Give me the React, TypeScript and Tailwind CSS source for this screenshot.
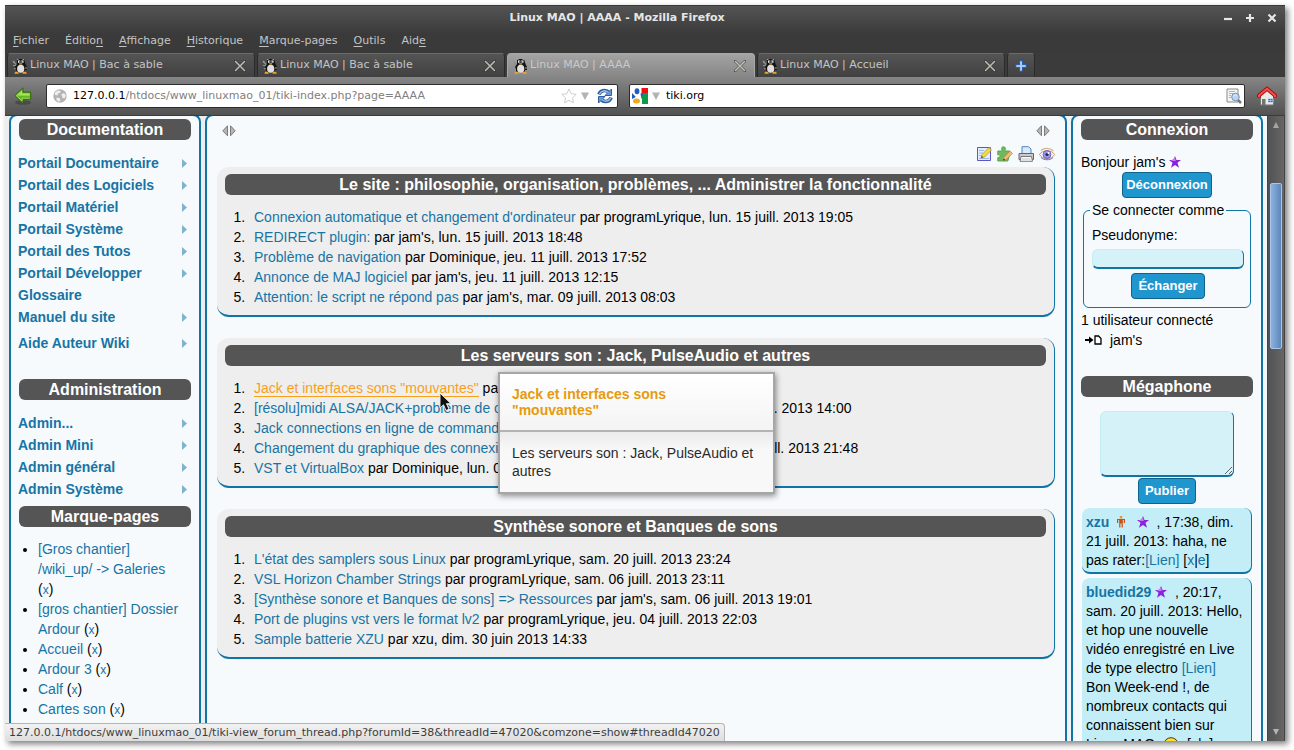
import { ReactNode } from 'react'
import clsx from 'clsx'

type MenuEntry = { label: string; arrow?: boolean; spaced?: boolean }
type Topic = { title: string; info: string; hover?: boolean }

const DOC_MENU: MenuEntry[] = [
    { label: 'Portail Documentaire', arrow: true },
    { label: 'Portail des Logiciels', arrow: true },
    { label: 'Portail Matériel', arrow: true },
    { label: 'Portail Système', arrow: true },
    { label: 'Portail des Tutos', arrow: true },
    { label: 'Portail Développer', arrow: true },
    { label: 'Glossaire' },
    { label: 'Manuel du site', arrow: true },
    { label: 'Aide Auteur Wiki', arrow: true, spaced: true },
]

const ADMIN_MENU: MenuEntry[] = [
    { label: 'Admin...', arrow: true },
    { label: 'Admin Mini', arrow: true },
    { label: 'Admin général', arrow: true },
    { label: 'Admin Système', arrow: true },
]

const BOOKMARKS = [
    '[Gros chantier] /wiki_up/ -> Galeries',
    '[gros chantier] Dossier Ardour',
    'Accueil',
    'Ardour 3',
    'Calf',
    'Cartes son',
]

const SITE_TOPICS: Topic[] = [
    { title: "Connexion automatique et changement d'ordinateur", info: 'par programLyrique, lun. 15 juill. 2013 19:05' },
    { title: 'REDIRECT plugin:', info: "par jam's, lun. 15 juill. 2013 18:48" },
    { title: 'Problème de navigation', info: 'par Dominique, jeu. 11 juill. 2013 17:52' },
    { title: 'Annonce de MAJ logiciel', info: "par jam's, jeu. 11 juill. 2013 12:15" },
    { title: 'Attention: le script ne répond pas', info: "par jam's, mar. 09 juill. 2013 08:03" },
]

const SERVER_TOPICS: Topic[] = [
    { title: 'Jack et interfaces sons "mouvantes"', info: "par jam's, lun. 22 juill. 2013 10:12", hover: true },
    { title: '[résolu]midi ALSA/JACK+problème de configuration', info: 'par programLyrique, jeu. 18 juill. 2013 14:00' },
    { title: 'Jack connections en ligne de commande', info: "par jam's, mar. 16 juill. 2013" },
    { title: 'Changement du graphique des connexions de Jack', info: 'par programLyrique, sam. 13 juill. 2013 21:48' },
    { title: 'VST et VirtualBox', info: 'par Dominique, lun. 08 juill. 2013 12:20' },
]

const SYNTH_TOPICS: Topic[] = [
    { title: "L'état des samplers sous Linux", info: 'par programLyrique, sam. 20 juill. 2013 23:24' },
    { title: 'VSL Horizon Chamber Strings', info: 'par programLyrique, sam. 06 juill. 2013 23:11' },
    { title: '[Synthèse sonore et Banques de sons] => Ressources', info: "par jam's, sam. 06 juill. 2013 19:01" },
    { title: 'Port de plugins vst vers le format lv2', info: 'par programLyrique, jeu. 04 juill. 2013 22:03' },
    { title: 'Sample batterie XZU', info: 'par xzu, dim. 30 juin 2013 14:33' },
]

const TABS = [
    { title: 'Linux MAO | Bac à sable' },
    { title: 'Linux MAO | Bac à sable' },
    { title: 'Linux MAO | AAAA', active: true },
    { title: 'Linux MAO | Accueil' },
]

// [before, mnemonic, after]
const MENUS = [
    ['', 'F', 'ichier'],
    ['Éditio', 'n', ''],
    ['', 'A', 'ffichage'],
    ['', 'H', 'istorique'],
    ['', 'M', 'arque-pages'],
    ['', 'O', 'utils'],
    ['Aid', 'e', ''],
]

function TuxIcon() {
    return (
        <svg viewBox="0 0 16 16" className="size-4 shrink-0">
            <path d="M1 3l3.500 4M1 7.500h3M2 11l2-1" stroke="#8f8f8f" strokeWidth="1.200" />
            <path d="M5 1h7l1.500 5 1.500 3v3h-2v2H4v-3L3 9l2-3z" fill="#141414" />
            <path d="M5 1.500h1.500M10.500 1.500H12M1 4h1.500M14 9v2" stroke="#a2a2a2" />
            <ellipse cx="8.700" cy="10.800" rx="3.600" ry="4" fill="#dfdfe2" />
            <path d="M6 2.500h2.300v2.300H6zM9.200 2.500h2.300v2.300H9.200z" fill="#f4f4f4" />
            <path d="M7.200 3.300h1v1.200h-1zM9.300 3.300h1v1.200h-1z" fill="#111" />
            <path d="M7.200 5.300h3v1.200h-3z" fill="#eda024" />
            <path d="M2.500 15.800c0-2 1.500-2.500 3-2 .8.500 1.500 1.300 1.200 2zM10.500 15.800c0-2 1-2.500 2.300-2 1.500 0 2.300 1.300 1.800 2z" fill="#f9a11b" />
        </svg>
    )
}

function CloseIcon() {
    return (
        <svg viewBox="0 0 12 12" className="size-3">
            <path d="M1 1l10 10M11 1L1 11" stroke="#2d2d2d" strokeWidth="2.500" strokeLinecap="round" opacity=".6" />
            <path d="M1.500 1.500l9 9M10.500 1.500l-9 9" stroke="#bfc0b5" strokeWidth="1.500" strokeLinecap="round" />
        </svg>
    )
}

function BackIcon() {
    return (
        <svg viewBox="0 0 18 18" className="size-[18px]">
            <ellipse cx="9" cy="15.500" rx="8" ry="2.300" fill="#2e2e2e" opacity=".45" />
            <path d="M.8 8.500L9 .8v4.400h7.700v7H9v4.300z" fill="#66b626" stroke="#2f6b0c" strokeLinejoin="round" />
            <path d="M2.300 8.500L8 3.200v3h7.700v2.500z" fill="#a5e05c" />
            <path d="M2.300 8.500L8 14v-2.800h7.700" fill="none" stroke="#a9e35e" strokeWidth=".8" />
        </svg>
    )
}

function GlobeIcon() {
    return (
        <svg viewBox="0 0 14 14" className="size-3.5 shrink-0">
            <circle cx="7" cy="7" r="6.700" fill="#b2b2b2" />
            <path d="M2 3.500L5 1.500l3 .5-1 2-2 .5-.5 2L2 6zM8 5.500l3-1.500 2 2.500-1.500 3-2-.5-.5-2zM3.500 8.500l3 .5 1 2-1.500 2-2.500-2z" fill="#eee" />
        </svg>
    )
}

function StarOutlineIcon() {
    return (
        <svg viewBox="0 0 16 16" className="size-4">
            <path d="M8 1l2.200 4.700 5 .6-3.700 3.500 1 5L8 12.300l-4.500 2.500 1-5L.8 6.300l5-.6z" fill="#fff" stroke="#cfcfcf" strokeLinejoin="round" />
        </svg>
    )
}

function DownTriangle() {
    return (
        <svg viewBox="0 0 8 8" className="h-2 w-2">
            <path d="M0 .5h8L4 8z" fill="#b4b4b4" />
        </svg>
    )
}

function ReloadIcon() {
    return (
        <svg viewBox="0 0 16 16" className="size-4">
            <path d="M2 6.500C3 2.500 8 1.200 11.500 4" fill="none" stroke="#2f5f9f" strokeWidth="3.600" />
            <path d="M14.500 1v6.500H8z" fill="#6a9ad5" stroke="#2f5f9f" />
            <path d="M2.500 6C4 2.500 8 1.800 11.500 4.500" fill="none" stroke="#9dc0e8" strokeWidth="1.500" />
            <path d="M14 9.500c-1 4-6 5.300-9.500 2.500" fill="none" stroke="#2f5f9f" strokeWidth="3.600" />
            <path d="M1.500 15V8.500H8z" fill="#6a9ad5" stroke="#2f5f9f" />
            <path d="M13.500 10c-1.500 3.500-5.500 4.200-9 1.500" fill="none" stroke="#9dc0e8" strokeWidth="1.500" />
        </svg>
    )
}

function GoogleIcon() {
    return (
        <svg viewBox="0 0 16 16" className="size-4 shrink-0">
            <path d="M8 0h8v5H8z" fill="#ee1010" />
            <path d="M9 5h7v11H9z" fill="#0f9a48" />
            <path d="M0 5l4 4-4 2z" fill="#1f5cc0" />
            <path d="M7 0h2.500v5L8 8l2 3v5H4l-1-6 2-4z" fill="#fff" />
            <ellipse cx="5" cy="3.200" rx="2.400" ry="3" fill="#1f5cc0" />
            <path d="M8.500 5.500h2.500v2L9 8.500z" fill="#1f5cc0" />
            <ellipse cx="4.500" cy="13" rx="3.500" ry="2.500" fill="#f0a81c" />
        </svg>
    )
}

function PageSearchIcon() {
    return (
        <svg viewBox="0 0 16 16" className="size-4 shrink-0">
            <path d="M1 1h11v13H1z" fill="#f4f4f2" stroke="#8b8b88" />
            <path d="M3 3.500h6M3 5.500h4M3 7.500h2M3 9.500h2" stroke="#b5b5b3" />
            <path d="M12 12l3 3" stroke="#777" strokeWidth="2.500" />
            <circle cx="9.500" cy="9" r="3.800" fill="#b9d3f1" stroke="#7791b4" />
            <path d="M7.500 8.500c.5-1.500 2-1.800 3-1.300" fill="none" stroke="#eef6ff" />
        </svg>
    )
}

function HomeIcon() {
    return (
        <svg viewBox="0 0 20 20" className="size-5 shrink-0">
            <path d="M3.500 9L10 4l6.500 5v10h-13z" fill="#e9e9e6" stroke="#74746f" />
            <path d="M5 13h3.500v6H5z" fill="#74746c" />
            <path d="M11 12.500h5v4h-5z" fill="#3768b0" stroke="#fff" strokeWidth=".5" />
            <path d="M13.500 12.500v4M11 14.500h5" stroke="#b8cce8" strokeWidth=".7" />
            <path d="M2 11.500v-2L10 2.700l8 6.800v2" fill="none" stroke="#b30808" strokeWidth="3.800" />
            <path d="M2 11v-1.500L10 2.700l8 6.800V11" fill="none" stroke="#f05050" strokeWidth="2" />
        </svg>
    )
}

function ColumnToggle() {
    return (
        <button type="button" aria-label="Afficher ou masquer la colonne" className="h-3 w-3.5">
            <svg viewBox="0 0 14 12" className="h-3 w-3.5">
                <path d="M5.500 .8v10L.8 5.800zM8.500 .8v10l4.700-5z" fill="#b5b5b5" stroke="#7d7d7d" />
            </svg>
        </button>
    )
}

function EditIcon() {
    return (
        <svg viewBox="0 0 16 16" className="size-4">
            <path d="M1.500 1.500h13v13h-13z" fill="#e4ecff" stroke="#5b57c4" />
            <path d="M3 4.500h5M3 7h4M3 9.500h2M3 12.500h10" stroke="#9db4ec" />
            <path d="M5 12l1-3.500L13 1.500l2.500 2.500-7 7z" fill="#f3dc3c" stroke="#b09a30" strokeWidth=".8" />
            <path d="M5 12l.7-2.300 1.600 1.600z" fill="#444" />
        </svg>
    )
}

function PluginIcon() {
    return (
        <svg viewBox="0 0 16 16" className="size-4">
            <path d="M.8 5h4.500C4 1.500 5 .8 6.500 .8s2.500 1 1.300 4.200h5V8l-2 7H.8v-3.500c3 .5 3-3.500 0-2.500z" fill="#6dbb5c" stroke="#58a84c" />
            <path d="M6 14.500l1-3.300 6-6 2.300 2.300-6 6z" fill="#f0bd7c" stroke="#b8843f" strokeWidth=".8" />
            <path d="M6 14.500l.7-2 1.500 1.400z" fill="#333" />
        </svg>
    )
}

function PrintIcon() {
    return (
        <svg viewBox="0 0 16 16" className="size-4">
            <path d="M4 .7h6.500L13 3v6H4z" fill="#d9e9fb" stroke="#4a84c4" />
            <path d="M1 7.500h14.500v6H1z" fill="#c9c9cc" stroke="#65656e" />
            <path d="M3 10.500h10.500l1 4.800H2z" fill="#fafafa" stroke="#77777d" />
            <path d="M3.500 13h9" stroke="#c3c3c9" />
        </svg>
    )
}

function EyeIcon() {
    return (
        <svg viewBox="0 0 16 16" className="size-4">
            <path d="M.5 8.500C3 3.500 13 3.500 15.500 8.500 13 14 3 14 .5 8.500z" fill="#f5f4ff" stroke="#c49a6c" />
            <path d="M2 4.500C5 1.500 11 1.500 14.500 5" fill="none" stroke="#dcb48c" strokeWidth="1.300" />
            <circle cx="8" cy="8.500" r="3.900" fill="#9c98ea" stroke="#6a66c8" />
            <circle cx="8" cy="8.500" r="1.600" fill="#26235e" />
            <circle cx="9.500" cy="7" r="1" fill="#fff" />
            <path d="M2 11.500c3 3 9 3 12 0" fill="none" stroke="#6a66c8" />
        </svg>
    )
}

function StarIcon() {
    return (
        <svg viewBox="0 0 12 12" className="inline-block size-3 align-[-1px]">
            <path d="M6 0l1.500 4H12L8.500 6.800l1.500 5L6 9l-4 2.800 1.500-5L0 4h4.500z" fill="#8b22dd" />
            <path d="M6 1.500L6.800 5H4L2 4.800z" fill="#c57af5" />
        </svg>
    )
}

function PersonIcon() {
    return (
        <svg viewBox="0 0 8 12" className="inline-block h-3 w-2 align-[-1px]">
            <path d="M2.800 0h2.500v2.500H2.800z" fill="#e09a3c" />
            <path d="M.6 7V3.500h6.800V7M4 3.500v4M2.800 4v7.500M5.200 4v7.500" fill="none" stroke="#cc4f12" strokeWidth="1.200" />
        </svg>
    )
}

function SmileyIcon() {
    return (
        <svg viewBox="0 0 16 16" className="mx-1 inline-block size-4 align-[-4px]">
            <circle cx="8" cy="8" r="7.300" fill="#ffe02e" stroke="#4d3b00" />
            <path d="M5.500 4v4M10.500 4v4" stroke="#222" strokeWidth="1.500" />
            <path d="M4 10c2 3 6 3 8 0" fill="none" stroke="#222" />
        </svg>
    )
}

function LoginIcon() {
    return (
        <svg viewBox="0 0 17 10" className="h-2.5 w-[17px]">
            <path d="M0 5h6" stroke="#000" strokeWidth="2" />
            <path d="M4 1.500L8.500 5 4 8.500z" fill="#000" />
            <path d="M10 1h3.500L16 3.500V9h-6z" fill="#fff" stroke="#000" strokeWidth="1.300" />
        </svg>
    )
}

function Pointer() {
    return (
        <svg viewBox="0 0 14 20" className="absolute top-[54px] left-[222px] h-5 w-3.5">
            <path d="M1 1v15l3.500-3.200L7 18.500l3-1.300-2.500-5.500H12z" fill="#111" stroke="#e8e8e8" strokeLinejoin="round" />
        </svg>
    )
}

function TitleBar() {
    return (
        <div className="grid h-6 grid-cols-[1fr_auto] items-center pr-2 text-[#e6e6e6]">
            <h1 className="pl-1.5 text-center text-[11px] font-bold">Linux MAO | AAAA - Mozilla Firefox</h1>
            <div className="flex gap-3">
                {[
                    ['Réduire', 'M1 6h8'],
                    ['Agrandir', 'M1 5h8M5 1v8'],
                    ['Fermer', 'M1.500 1.500l7 7M8.500 1.500l-7 7'],
                ].map(([label, d]) => (
                    <button key={label} type="button" aria-label={label} className="size-2.5">
                        <svg viewBox="0 0 10 10" className="size-2.5">
                            <path d={d} stroke="#e6e6e6" strokeWidth="2.200" />
                        </svg>
                    </button>
                ))}
            </div>
        </div>
    )
}

function MenuBar() {
    return (
        <nav className="flex h-[23px] items-center gap-4 px-2 text-[11px] text-[#c4c4c4]">
            {MENUS.map(([before, key, after]) => (
                <button key={before + key + after} type="button">
                    {before}
                    <span className="underline underline-offset-2">{key}</span>
                    {after}
                </button>
            ))}
        </nav>
    )
}

function TabBar() {
    return (
        <div className="flex h-6 gap-0.5 px-0.5">
            {TABS.map((tab, i) => (
                <div
                    key={i}
                    className={clsx(
                        'flex w-[248px] shrink items-center rounded-t border border-b-0 pr-2 pl-1 text-[11px]',
                        tab.active
                            ? 'border-[#a8a8a8] bg-linear-to-b from-[#a4a4a4] to-[#868686] text-[#c9c9c9]'
                            : 'border-[#2b2b2b] border-t-[#6c6c6c] bg-linear-to-b from-[#545454] to-[#414141] text-[#c4c4c4]'
                    )}
                >
                    <button type="button" className="flex flex-1 items-center gap-0.5">
                        <TuxIcon />
                        {tab.title}
                    </button>
                    <button type="button" aria-label="Fermer l'onglet">
                        <CloseIcon />
                    </button>
                </div>
            ))}
            <button
                type="button"
                aria-label="Nouvel onglet"
                className="flex w-7 items-center justify-center rounded-t border border-b-0 border-[#2b2b2b] border-t-[#6c6c6c] bg-linear-to-b from-[#545454] to-[#414141]"
            >
                <svg viewBox="0 0 12 12" className="size-3">
                    <path d="M6 .3v11.400M.3 6h11.400" stroke="#2b5ea6" strokeWidth="4" />
                    <path d="M6 1.300v9.400M1.300 6h9.400" stroke="#a8c8f0" strokeWidth="2" />
                </svg>
            </button>
        </div>
    )
}

function NavBar() {
    return (
        <div className="flex h-[39px] items-center border-b border-[#3c3c3c] bg-linear-to-b from-[#868686] to-[#525252] pr-2 pl-[9px] text-[11px]">
            <button type="button" aria-label="Page précédente" className="mr-3.5">
                <BackIcon />
            </button>
            <div className="mr-[11px] flex h-6 w-[572px] shrink items-center rounded-xs border border-[#2c2c2c] bg-white pr-1 pl-1.5">
                <GlobeIcon />
                <p className="ml-1.5 flex-1 whitespace-nowrap text-[#808080]">
                    <span className="text-black">127.0.0.1</span>/htdocs/www_linuxmao_01/tiki-index.php?page=AAAA
                </p>
                <button type="button" aria-label="Marquer cette page" className="mr-1">
                    <StarOutlineIcon />
                </button>
                <button type="button" aria-label="Historique" className="mr-2">
                    <DownTriangle />
                </button>
                <button type="button" aria-label="Actualiser">
                    <ReloadIcon />
                </button>
            </div>
            <div className="flex h-6 flex-1 items-center rounded-xs border border-[#2c2c2c] bg-white pr-0.5 pl-0.5">
                <GoogleIcon />
                <button type="button" aria-label="Moteur de recherche" className="mx-1">
                    <DownTriangle />
                </button>
                <input aria-label="Recherche" defaultValue="tiki.org" className="ml-0.5 min-w-0 flex-1 text-black outline-none" />
                <button type="button" aria-label="Rechercher">
                    <PageSearchIcon />
                </button>
            </div>
            <button type="button" aria-label="Accueil" className="ml-3">
                <HomeIcon />
            </button>
        </div>
    )
}

function Heading({ children, className }: { children: ReactNode; className?: string }) {
    return (
        <h2 className={clsx('h-[21px] rounded-md bg-[#555] text-center text-base leading-[21px] font-bold text-white', className)}>
            {children}
        </h2>
    )
}

function SideMenu({ entries }: { entries: MenuEntry[] }) {
    return (
        <ul className="mt-3 -ml-px text-sm leading-[22px] font-bold">
            {entries.map((entry) => (
                <li key={entry.label} className={clsx(entry.spaced && 'mt-1')}>
                    <a href="#" className="flex items-center justify-between pr-1 text-[#1874a4]">
                        {entry.label}
                        {entry.arrow && (
                            <svg viewBox="0 0 5 9" className="h-[9px] w-[5px]">
                                <path d="M0 0l5 4.500L0 9z" fill="#7db3d0" />
                            </svg>
                        )}
                    </a>
                </li>
            ))}
        </ul>
    )
}

function Column({ children, className }: { children: ReactNode; className?: string }) {
    return (
        <div className={clsx('-mt-0.5 rounded-t-lg border-2 border-b-0 border-[#1074a6] bg-[#f6fafc] pt-[3px]', className)}>
            {children}
        </div>
    )
}

function LeftColumn() {
    return (
        <Column className="w-48 shrink-0 px-2">
            <Heading>Documentation</Heading>
            <SideMenu entries={DOC_MENU} />
            <Heading className="mt-[25px]">Administration</Heading>
            <SideMenu entries={ADMIN_MENU} />
            <Heading className="mt-1.5">Marque-pages</Heading>
            <ul className="mt-3 list-disc pr-2.5 pl-[19px] text-sm leading-5">
                {BOOKMARKS.map((name) => (
                    <li key={name}>
                        <a href="#" className="text-[#1874a4]">{name}</a>{' '}
                        (<a href="#" className="text-xs leading-none text-[#1874a4]">x</a>)
                    </li>
                ))}
            </ul>
        </Column>
    )
}

function TopicBox({ title, topics, children }: { title: string; topics: Topic[]; children?: ReactNode }) {
    return (
        <section className="relative rounded-xl border-t-0 border-r border-b-2 border-[#1074a6] bg-[#eee] pt-[7px] pr-2 pb-2 pl-2">
            <Heading>{title}</Heading>
            <ol className="mt-3 list-decimal pl-6 text-sm leading-5 text-black">
                {topics.map((topic) => (
                    <li key={topic.title} className="pl-[5px] whitespace-nowrap">
                        <a
                            href="#"
                            className={topic.hover ? 'border-b border-[#f9a01b] text-[#f9a01b]' : 'text-[#1874a4]'}
                        >
                            {topic.title}
                        </a>{' '}
                        {topic.info}
                    </li>
                ))}
            </ol>
            {children}
        </section>
    )
}

function TopicTooltip() {
    return (
        <div
            role="tooltip"
            className="absolute top-[34px] left-[281px] w-[277px] border-2 border-[#a6a6a6] bg-[#f7f7f7] text-sm shadow-[1px_2px_6px_rgba(0,0,0,0.45)]"
        >
            <p className="border-b-2 border-[#b4b4b4] bg-linear-to-b from-white to-[#f4f4f4] py-3 pr-16 pl-3 leading-4 font-bold text-[#e69b0c]">
                Jack et interfaces sons "mouvantes"
            </p>
            <p className="bg-linear-to-b from-[#ebebeb] to-[#f8f8f8] to-30% px-3 pt-3 pb-3 leading-[18px] text-[#2a2a2a]">
                Les serveurs son : Jack, PulseAudio et autres
            </p>
        </div>
    )
}

function MainColumn() {
    return (
        <Column className="min-w-0 flex-1 px-2.5">
            <div className="flex justify-between px-[5px] pt-1.5">
                <ColumnToggle />
                <ColumnToggle />
            </div>
            <div className="mt-[9px] mb-[5px] flex justify-end gap-[5px]">
                <button type="button" aria-label="Modifier"><EditIcon /></button>
                <button type="button" aria-label="Modules"><PluginIcon /></button>
                <button type="button" aria-label="Imprimer"><PrintIcon /></button>
                <button type="button" aria-label="Surveiller"><EyeIcon /></button>
            </div>
            <div className="flex flex-col gap-[21px]">
                <TopicBox title="Le site : philosophie, organisation, problèmes, ... Administrer la fonctionnalité" topics={SITE_TOPICS} />
                <TopicBox title="Les serveurs son : Jack, PulseAudio et autres" topics={SERVER_TOPICS}>
                    <TopicTooltip />
                    <Pointer />
                </TopicBox>
                <TopicBox title="Synthèse sonore et Banques de sons" topics={SYNTH_TOPICS} />
            </div>
        </Column>
    )
}

function Button({ children, tight }: { children: ReactNode; tight?: boolean }) {
    return (
        <button
            type="button"
            className={clsx(
                'mx-auto block h-[26px] rounded border border-[#0f628c] bg-[#2096cf] text-[13px] font-bold text-white',
                tight ? 'px-[3px]' : 'px-1.5'
            )}
        >
            {children}
        </button>
    )
}

function Shout({ children }: { children: ReactNode }) {
    return (
        <li className="rounded-lg border-r border-b-2 border-[#1074a6] bg-[#c3eef7] pt-[5px] pr-2 pb-0.5 pl-1 text-sm leading-[19px] text-black">
            {children}
        </li>
    )
}

function Link({ children }: { children: ReactNode }) {
    return <a href="#" className="text-[#1874a4]">{children}</a>
}

function RightColumn() {
    return (
        <Column className="w-48 shrink-0 px-2 text-sm leading-5 text-black">
            <Heading>Connexion</Heading>
            <p className="mt-3">
                Bonjour jam's <StarIcon />
            </p>
            <Button tight>Déconnexion</Button>
            <fieldset className="mx-0.5 mt-0.5 rounded-md border border-[#1074a6] pr-1.5 pb-2 pl-2">
                <legend className="-ml-0.5 px-0.5">Se connecter comme</legend>
                <label htmlFor="pseudo" className="mt-[5px] block">Pseudonyme:</label>
                <input
                    id="pseudo"
                    className="mt-1 mb-1 block h-5 w-full rounded-md border border-b-2 border-[#c3eef7] border-r-[#1074a6] border-b-[#1074a6] bg-[#d5f2f8] outline-none"
                />
                <Button>Échanger</Button>
            </fieldset>
            <p className="mt-0.5">1 utilisateur connecté</p>
            <p className="flex items-center gap-2 pl-1">
                <LoginIcon /> jam's
            </p>
            <Heading className="mt-[26px]">Mégaphone</Heading>
            <textarea
                aria-label="Message"
                className="mx-auto mt-3.5 block h-[66px] w-[134px] rounded-md border border-b-2 border-[#c3eef7] border-r-[#1074a6] border-b-[#1074a6] bg-[#d5f2f8] outline-none"
            />
            <div className="mt-px">
                <Button>Publier</Button>
            </div>
            <ul className="mt-1 flex flex-col gap-1 px-px">
                <Shout>
                    <a href="#" className="font-bold text-[#1874a4]">xzu</a>&nbsp; <PersonIcon />&nbsp;&nbsp; <StarIcon />
                    &nbsp; , 17:38, dim. 21 juill. 2013: haha, ne pas rater:<Link>[Lien]</Link> [<Link>x</Link>|<Link>e</Link>]
                </Shout>
                <Shout>
                    <a href="#" className="font-bold text-[#1874a4]">bluedid29</a> <StarIcon />&nbsp; , 20:17,
                    sam. 20 juill. 2013: Hello, et hop une nouvelle vidéo enregistré en Live de type electro <Link>[Lien]</Link> Bon
                    Week-end !, de nombreux contacts qui connaissent bien sur Linux MAO <SmileyIcon /> [<Link>x</Link>|<Link>e</Link>]
                </Shout>
            </ul>
        </Column>
    )
}

function Scrollbar() {
    return (
        <div className="flex w-[18px] shrink-0 flex-col items-center border-x border-[#444] bg-linear-to-r from-[#525252] to-[#666] text-[#a5a5a5]">
            <svg viewBox="0 0 6 6" className="mt-1.5 size-1.5">
                <path d="M3 0l3 6H0z" fill="#a5a5a5" />
            </svg>
            <div className="mt-[55px] h-[166px] w-3 rounded-xs border border-[#a6c5e8] bg-linear-to-r from-[#8db1dc] to-[#5c87ba]" />
            <svg viewBox="0 0 6 6" className="mt-auto mb-1.5 size-1.5">
                <path d="M0 0h6L3 6z" fill="#b5b5b5" />
            </svg>
        </div>
    )
}

export default function App() {
    return (
        <div className="h-screen bg-white pt-[5px] pr-[9px] pb-[9px] pl-[5px] font-['DejaVu_Sans',sans-serif]">
            <div className="relative flex h-full flex-col overflow-hidden shadow-[3px_3px_6px_rgba(0,0,0,0.5)]">
                <header className="shrink-0 border-t border-[#3a3a3a] bg-[#3b3b3b]">
                    <div className="bg-linear-to-b from-[#545454] to-[#3a3a3a] to-60%">
                        <TitleBar />
                        <MenuBar />
                    </div>
                    <TabBar />
                    <NavBar />
                </header>
                <main className="flex min-h-0 flex-1 bg-linear-to-r from-[#ededed] from-50% to-[#f4f7f9] font-['Liberation_Sans',Arial,sans-serif]">
                    <div className="flex min-w-0 flex-1 gap-1 overflow-hidden px-1">
                        <LeftColumn />
                        <MainColumn />
                        <RightColumn />
                    </div>
                    <Scrollbar />
                </main>
                <p className="absolute bottom-0 left-0 h-[18px] rounded-tr border-t border-r border-[#b5b5b5] bg-linear-to-b from-[#f2f2f2] to-[#dedede] px-1 text-[11px] leading-[17px] text-[#3c3c3c]">
                    127.0.0.1/htdocs/www_linuxmao_01/tiki-view_forum_thread.php?forumId=38&amp;threadId=47020&amp;comzone=show#threadId47020
                </p>
            </div>
        </div>
    )
}
